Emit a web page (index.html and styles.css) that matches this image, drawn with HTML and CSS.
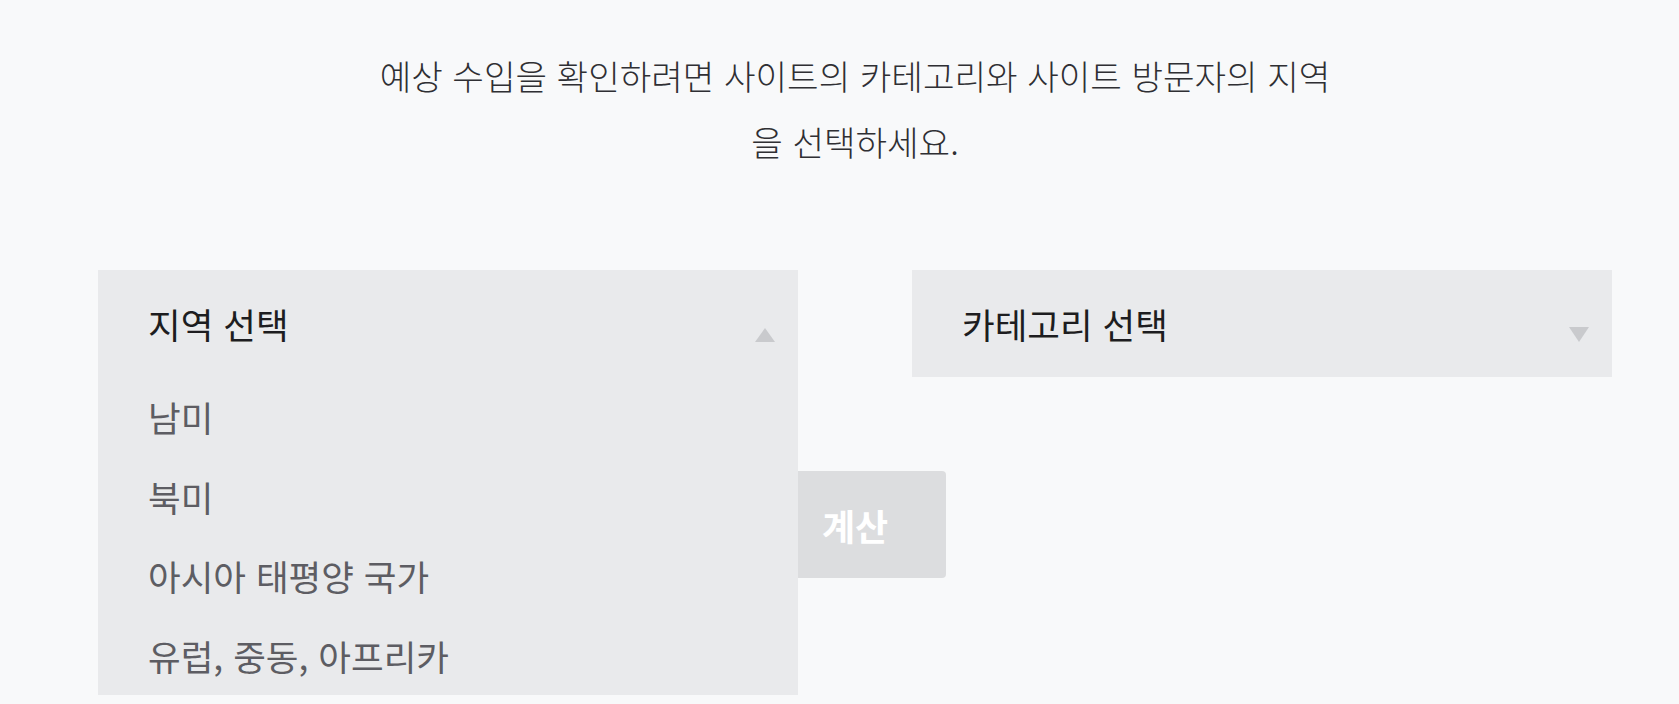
FILE: index.html
```html
<!DOCTYPE html>
<html lang="ko">
<head>
<meta charset="utf-8">
<title>예상 수입 계산</title>
<link rel="stylesheet" href="styles.css">
</head>
<body>
<main class="page">
  <p class="intro">예상 수입을 확인하려면 사이트의 카테고리와 사이트 방문자의 지역을 선택하세요.</p>

  <div class="selectors">
    <div class="dropdown is-open">
      <div class="dropdown-head">
        <span class="dropdown-label">지역 선택</span>
        <span class="caret caret-up"></span>
      </div>
      <ul class="dropdown-list">
        <li class="dropdown-item">남미</li>
        <li class="dropdown-item">북미</li>
        <li class="dropdown-item">아시아 태평양 국가</li>
        <li class="dropdown-item">유럽, 중동, 아프리카</li>
      </ul>
    </div>

    <div class="dropdown">
      <div class="dropdown-head">
        <span class="dropdown-label">카테고리 선택</span>
        <span class="caret caret-down"></span>
      </div>
    </div>
  </div>

  <div class="actions">
    <button class="calc-btn" type="button">계산</button>
  </div>
</main>
</body>
</html>
```

FILE: styles.css
```css
* {
  box-sizing: border-box;
}

html, body {
  margin: 0;
  padding: 0;
}

body {
  background: #f8f9fa;
  font-family: "Noto Sans CJK KR", "Noto Sans", sans-serif;
  color: #333;
  min-height: 704px;
}

.page {
  width: 1514px;
  min-height: 704px;
  margin-left: 98px;
  padding-top: 42px;
}

.intro {
  margin: 0 auto;
  max-width: 972px;
  text-align: center;
  font-size: 34.3px;
  line-height: 66px;
  font-weight: 300;
  color: #2f2f33;
}

.selectors {
  margin-top: 96px;
  display: grid;
  grid-template-columns: 700px 700px;
  column-gap: 114px;
  position: relative;
  z-index: 2;
}

.dropdown {
  position: relative;
  background: #e9eaec;
}

.dropdown-head {
  height: 107px;
  padding: 0 23px 0 50px;
  display: flex;
  align-items: center;
  justify-content: space-between;
}

.dropdown-label {
  font-size: 35.5px;
  color: #1d1d20;
}

.caret {
  width: 0;
  height: 0;
  border-left: 10px solid transparent;
  border-right: 10px solid transparent;
  margin-top: 22px;
}

.caret-up {
  border-bottom: 14px solid #c9cacd;
}

.caret-down {
  border-top: 15px solid #c9cacd;
}

.dropdown-list {
  position: absolute;
  top: 107px;
  left: 0;
  right: 0;
  margin: 0;
  padding: 0;
  list-style: none;
  background: #e9eaec;
}

.dropdown-item {
  height: 79.5px;
  padding-left: 50px;
  display: flex;
  align-items: center;
  font-size: 35.5px;
  color: #5d5d63;
}

.actions {
  margin-top: 94px;
  display: flex;
  justify-content: center;
}

.calc-btn {
  width: 182px;
  height: 107px;
  border: 0;
  border-radius: 4px;
  background: #dcdddf;
  color: #ffffff;
  font-family: inherit;
  font-size: 36px;
  font-weight: 700;
}
```
